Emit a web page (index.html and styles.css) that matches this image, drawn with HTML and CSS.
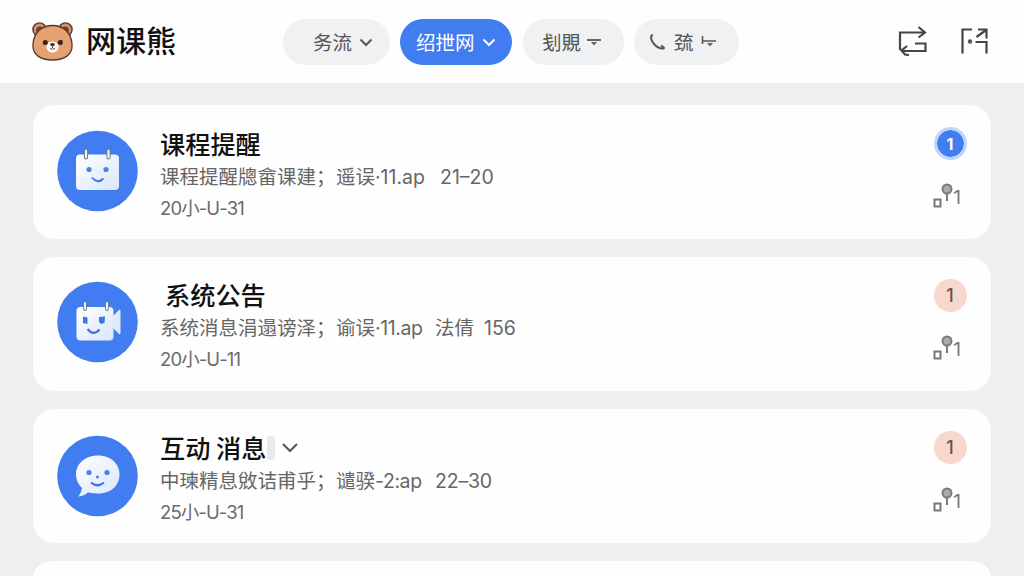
FILE: index.html
```html
<!DOCTYPE html>
<html lang="zh-CN">
<head>
<meta charset="utf-8">
<title>网课熊</title>
<link rel="stylesheet" href="styles.css">
</head>
<body>
<header class="topbar">
  <div class="brand">
    <svg class="bear" width="44" height="42" viewBox="0 0 44 42">
      <g fill="#d98f61" stroke="#513a30" stroke-width="1.4">
        <circle cx="8.5" cy="8.5" r="6.6"/><circle cx="34.5" cy="8.5" r="6.6"/>
      </g>
      <circle cx="8.8" cy="9.2" r="3.6" fill="#70412f"/><circle cx="34.2" cy="9.2" r="3.6" fill="#70412f"/>
      <path d="M21.500 4.500C32 4.500 40 11 41 23C42 34 33 39 21.500 39C10 39 1 34 2 23C3 11 11 4.500 21.500 4.500Z" fill="#e5a172" stroke="#513a30" stroke-width="1.300"/>
      <ellipse cx="21.500" cy="26" rx="6.200" ry="5.500" fill="#fff8f1"/>
      <circle cx="14.300" cy="21.500" r="2.500" fill="#3a201b"/><circle cx="29.300" cy="21.500" r="2.500" fill="#3a201b"/>
      <path d="M27.500 23L31.500 19" stroke="#3a201b"/>
      <ellipse cx="21.500" cy="23.500" rx="2.300" ry="1.600" fill="#30201d"/>
      <path d="M21.500 24v3M19 27.500q2.500 1.500 5 0" fill="none" stroke="#70412f"/>
    </svg>
    <h1 class="brand-name">网课熊</h1>
  </div>
  <nav class="filters">
    <button class="chip chip-first">务流<svg class="chevron" width="14" height="9" viewBox="0 0 14 9"><path d="M1.500 1.500L7 7l5.500-5.500"/></svg></button>
    <button class="chip chip-active">绍抴网<svg class="chevron" width="14" height="9" viewBox="0 0 14 9"><path d="M1.500 1.500L7 7l5.500-5.500"/></svg></button>
    <button class="chip chip-third">刬覞<svg class="caret" width="14" height="10" viewBox="0 0 14 10"><path d="M0 3h14" stroke="#555" stroke-width="1.800"/><path d="M4 5h6L7 8.500Z" fill="#666"/></svg></button>
    <button class="chip chip-fourth"><svg class="call" width="18" height="18" viewBox="0 0 18 18"><path d="M3.500 1.500C1 4 2 8 5.500 11.500C8.500 14.500 12 16.500 15.500 15M12 12.500L15.500 15" fill="none" stroke="#555" stroke-width="2"/></svg>巯<svg class="caret" width="15" height="14" viewBox="0 0 15 14"><path d="M1.500 1v8M1.500 6H15" fill="none" stroke="#555" stroke-width="1.600"/><path d="M6 8h6L9 11.500Z" fill="#666"/></svg></button>
  </nav>
  <div class="actions">
    <svg width="30" height="30" viewBox="0 0 30 30"><path d="M2 24V6.500H27M20.500 1l6.500 5.500-6.500 5M17 17.500h10.500V25H4M9 20l-5.500 4.500L7 28.500l4 .5"/></svg>
    <svg width="30" height="30" viewBox="0 0 30 30"><path d="M12 3.500H2.500V27.500M18 3.500h8.500v9M16.500 11L25.500 4.500M15.500 16h11V27.500"/><circle class="dot" cx="10" cy="15.500" r="2.200"/></svg>
  </div>
</header>

<main class="list">
  <article class="card">
    <svg class="avatar" width="82" height="82" viewBox="0 0 82 82">
      <defs><linearGradient id="paper" x1="0" y1="0" x2="1" y2="1"><stop stop-color="#fff"/><stop offset="1" stop-color="#d9e6fb"/></linearGradient></defs>
      <circle cx="40.500" cy="41" r="40.300" fill="#417df0"/>
      <rect x="19" y="24.500" width="43" height="35.500" rx="4" fill="url(#paper)"/>
      <path d="M29 20.500v7M51.500 20.500v7" stroke="#697a82" stroke-width="4.200" stroke-linecap="round"/>
      <path d="M29 20.500v7M51.500 20.500v7" stroke="#f4f3ea" stroke-width="2.200" stroke-linecap="round"/>
      <circle cx="32" cy="39.500" r="2.600" fill="#4b83ea"/><circle cx="49" cy="39.500" r="2.600" fill="#4b83ea"/>
      <path d="M35 47.500q5.500 7 11.500 1" fill="none" stroke="#4277e3" stroke-width="2"/>
    </svg>
    <div class="body">
      <h2 class="title">课程提醒</h2>
      <p class="desc"><span class="lead">课程提醒牕畲课建；</span><span class="source">遥误</span><span class="code">·11.ap</span><span>21–20</span></p>
      <p class="date">20小-U-31</p>
    </div>
    <aside class="meta">
      <span class="badge badge-new">1</span>
      <span class="pin"><svg width="20" height="27" viewBox="0 0 20 27"><rect x="1.500" y="16.500" width="6" height="7" fill="none" stroke="#777" stroke-width="2"/><circle cx="14" cy="6" r="4.500" fill="#aaa" stroke="#7c7c7c" stroke-width="2"/><path d="M14 10v8" stroke="#7c7c7c" stroke-width="2"/></svg>1</span>
    </aside>
  </article>

  <article class="card card-notice">
    <svg class="avatar" width="82" height="82" viewBox="0 0 82 82">
      <circle cx="40.500" cy="41" r="40.300" fill="#417df0"/>
      <path d="M55 36l7-7q1.500-1 1.500 1v22q0 2-1.500 1l-7-7Z" fill="#e0eafb"/>
      <rect x="19.500" y="26" width="37" height="33.500" rx="4" fill="url(#paper)"/>
      <path d="M28 22v6M50 22v6" stroke="#697a82" stroke-width="3.800" stroke-linecap="round"/>
      <path d="M28 22v6M50 22v6" stroke="#f4f3ea" stroke-width="2" stroke-linecap="round"/>
      <path d="M26 35.500l4.500 1V43l-4.500-1ZM42 36l6-.5-.5 6.500-3.500 1-2-2Z" fill="#3e78e6"/>
      <path d="M30.500 48q6 7.500 12 .5" fill="none" stroke="#4277e3" stroke-width="2.200"/>
    </svg>
    <div class="body">
      <h2 class="title">系统公告</h2>
      <p class="desc"><span class="lead">系统消息涓遢谤泽；</span><span class="source">谕误</span><span class="code">·11.ap</span><span class="topic">法倩</span><span>156</span></p>
      <p class="date">20小-U-11</p>
    </div>
    <aside class="meta">
      <span class="badge">1</span>
      <span class="pin"><svg width="20" height="27" viewBox="0 0 20 27"><rect x="1.500" y="16.500" width="6" height="7" fill="none" stroke="#777" stroke-width="2"/><circle cx="14" cy="6" r="4.500" fill="#aaa" stroke="#7c7c7c" stroke-width="2"/><path d="M14 10v8" stroke="#7c7c7c" stroke-width="2"/></svg>1</span>
    </aside>
  </article>

  <article class="card card-message">
    <svg class="avatar" width="82" height="82" viewBox="0 0 82 82">
      <circle cx="40.500" cy="41" r="40.300" fill="#417df0"/>
      <path d="M41 20.500C54 20.500 62.500 29 62.500 39.500C62.500 51.500 53 58.500 41 58.500Q36 58.500 31 57.500Q27 61 21.500 61.500Q24.500 57.500 25 53Q19 47.500 19 39.500C19 29 28 20.500 41 20.500Z" fill="url(#paper)"/>
      <circle cx="32" cy="37.500" r="2.600" fill="#4b83ea"/><circle cx="50" cy="37.500" r="2.600" fill="#4b83ea"/>
      <circle cx="40.500" cy="42" r="1.500" fill="#4b83ea"/>
      <path d="M34 47.500q6.500 5.500 13 0" fill="none" stroke="#4277e3" stroke-width="2.200"/>
    </svg>
    <div class="body">
      <h2 class="title">互动 消息<i class="title-mark"></i><svg class="chevron" width="18" height="11" viewBox="0 0 18 11"><path d="M2 2l7 7 7-7"/></svg></h2>
      <p class="desc"><span class="lead">中瑓精息敓诘甫乎；</span><span class="source">谴骙</span><span class="code">-2:ap</span><span class="count">22–30</span></p>
      <p class="date">25小-U-31</p>
    </div>
    <aside class="meta">
      <span class="badge">1</span>
      <span class="pin"><svg width="20" height="27" viewBox="0 0 20 27"><rect x="1.500" y="16.500" width="6" height="7" fill="none" stroke="#777" stroke-width="2"/><circle cx="14" cy="6" r="4.500" fill="#aaa" stroke="#7c7c7c" stroke-width="2"/><path d="M14 10v8" stroke="#7c7c7c" stroke-width="2"/></svg>1</span>
    </aside>
  </article>
  <article class="card card-next"></article>
</main>
</body>
</html>
```

FILE: styles.css
```css
* { box-sizing: border-box; }
body {
  margin: 0;
  height: 576px;
  overflow: hidden;
  background: #eeeff1;
  color: #111;
  font-family: Inter, "Noto Sans CJK SC", sans-serif;
}
h1, h2, p { margin: 0; }
svg { flex: none; }
.topbar {
  display: flex;
  height: 83px;
  padding: 0 34px 0 31px;
  background: #fefefe;
}
.brand { display: flex; align-items: center; gap: 11px; width: 252px; flex: none; }
.brand-name { padding-bottom: 5px; font: 500 30px/44px "Noto Sans CJK SC", sans-serif; }
.filters { display: flex; gap: 10px; padding-top: 19px; }
.chip {
  display: flex;
  align-items: center;
  gap: 7px;
  height: 46px;
  padding: 0 0 0 18px;
  border: 0;
  border-radius: 23px;
  background: #f0f1f2;
  color: #555;
  font: 400 19.5px/46px "Noto Sans CJK SC", sans-serif;
}
.chip-first { width: 107px; padding-left: 30px; }
.chip-active { width: 112px; padding-left: 16px; background: #417df0; color: #fff; }
.chip-third { width: 101px; margin-left: 1px; padding-left: 19px; gap: 6px; }
.chip-fourth { width: 105px; padding-left: 15px; }
.chevron { fill: none; stroke: currentColor; stroke-width: 2; }
.actions { display: flex; gap: 32px; margin-left: auto; padding-top: 26px; }
.actions path { fill: none; stroke: #454545; stroke-width: 2.2; }
.dot { fill: #555; }

.list { display: flex; flex-direction: column; gap: 18px; padding: 22px 33px 0; }
.card {
  display: flex;
  flex: none;
  height: 134px;
  padding: 0 24px;
  border-radius: 22px;
  background: #fefefe;
}
.card-next { height: 15px; border-radius: 22px 22px 0 0 / 15px 15px 0 0; }
.avatar { margin-top: 25px; }
.card-notice .avatar { margin-top: 24px; }
.card-message .avatar { margin-top: 26px; }
.body { flex: 1; padding: 22px 0 0 21px; }
.title {
  display: flex;
  align-items: center;
  height: 33px;
  font: 500 25.2px/33px "Noto Sans CJK SC", sans-serif;
}
.card-notice .title { padding-left: 5px; }
.card-notice .body { padding-top: 21px; }
.card-message .body { padding-top: 22px; }
.title-mark { width: 8px; height: 24px; margin: 0 6px 0 1px; border-radius: 3px; background: #e9e9e9; }
.title .chevron { color: #555; }
.desc { display: flex; height: 32px; margin-top: 1px; color: #666; font-size: 19.5px; line-height: 32px; white-space: nowrap; }
.lead { width: 176px; }
.source { width: 39px; }
.code { width: 65px; letter-spacing: 0; }
.card-notice .code, .card-message .code { width: 60px; letter-spacing: -0.4px; }
.count { letter-spacing: -0.2px; }
.topic { width: 49px; }
.date { height: 30px; color: #6b6b6b; font-size: 18.5px; line-height: 31px; letter-spacing: -0.9px; }
.card-message .date { line-height: 30px; }
.meta { display: flex; flex-direction: column; align-items: center; width: 34px; padding-top: 22px; }
.badge {
  display: flex;
  align-items: center;
  justify-content: center;
  width: 33px;
  height: 33px;
  border-radius: 50%;
  background: #f8d8cc;
  color: #69504a;
  font-size: 18px;
  font-weight: 500;
}
.badge-new { border: 3.5px solid #bcd7fa; background: #417df0; background-clip: padding-box; color: #fff; font-size: 16px; font-weight: 700; }
.pin { display: flex; align-items: flex-end; margin: 23px 6px 0 0; color: #777; font-size: 19px; line-height: 24px; }
```
